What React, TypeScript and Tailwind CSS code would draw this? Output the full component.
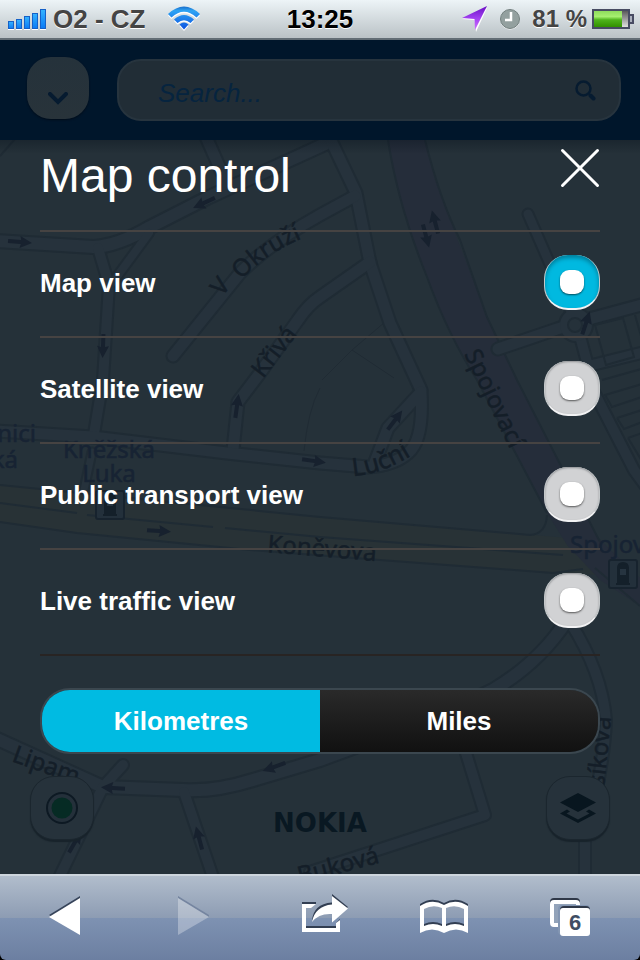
import { useState } from "react";

type Road = { d: string; w: number };

const roads: Road[] = [
  { w: 14, d: "M-5 241L93 247Q118 246 150 227L207 198L325 144" },
  { w: 13, d: "M203 130L226 182" },
  { w: 13, d: "M326 130L356 193L370 263L390 323L421 390" },
  { w: 13, d: "M173 356L240 273Q270 243 320 215L355 196" },
  { w: 13, d: "M370 262L320 297Q308 305 298 320L260 373L238 402L233 450" },
  { w: 12, d: "M98 248L109 285L103 380L94 434" },
  { w: 10, d: "M149 233L113 282" },
  { w: 13, d: "M-5 431L93 437L227 453L320 463L368 467Q395 465 408 453Q424 440 421 392L388 428L375 462" },
  { w: 9, d: "M92 452L84 490" },
  { w: 11, d: "M528 214L567 303L577 325" },
  { w: 13, d: "M498 349L557 329L593 318L645 304" },
  { w: 12, d: "M577 325L588 366L645 352" },
  { w: 12, d: "M594 392L634 470L645 485" },
  { w: 14, d: "M567 620Q540 662 493 690L440 716L320 760L253 780Q215 792 183 790L103 787L-5 738" },
  { w: 12, d: "M570 622Q602 672 606 720Q604 770 585 835V880" },
  { w: 12, d: "M462 740L485 815L310 872" },
  { w: 12, d: "M184 792L214 880" },
  { w: 12, d: "M123 765L103 787L58 880" },
];

const arrows: [number, number, number][] = [
  [20, 242, 5], [204, 203, 155], [103, 346, 92], [237, 406, -82], [395, 420, -53],
  [314, 461, 8], [159, 531, 4], [274, 767, 160], [113, 788, 183], [199, 838, -105],
  [586, 323, -72], [435, 222, -105], [426, 236, 75], [75, 842, -60],
];

const labels = [
  { id: "okruzi-v", d: "M222 297L246 267", text: "V", size: 24 },
  { id: "okruzi", d: "M242 280Q266 251 318 232", text: "Okruží", size: 24 },
  { id: "kriva", d: "M263 379L310 318", text: "Křivá", size: 24 },
  { id: "spojovaci", d: "M464 354L520 470", text: "Spojovací", size: 24 },
  { id: "lucni", d: "M353 476Q385 474 420 450", text: "Luční", size: 25 },
  { id: "konevova", d: "M267 552L400 563", text: "Koněvova", size: 24 },
  { id: "lipam", d: "M11 761L100 793", text: "Lipam", size: 24 },
  { id: "bukova", d: "M300 884L390 860", text: "Buková", size: 24 },
  { id: "sikova", d: "M604 787L614 690", text: "síkova", size: 24 },
];

function Station({ x, y }: { x: number; y: number }) {
  return (
    <g transform={`translate(${x} ${y})`}>
      <rect x="1" y="1" width="28" height="28" rx="2" fill="#23303b" stroke="#17232e" strokeWidth="2" />
      <path d="M10 23V9Q10 4 15 4Q20 4 20 9V23ZM8 25H22" fill="#14202a" stroke="#14202a" strokeWidth="2" />
      <path d="M12 10H18V16H12Z" fill="#263440" />
    </g>
  );
}

function CityMap() {
  return (
    <svg
      className="absolute inset-0 h-full w-full"
      viewBox="0 140 640 734"
      preserveAspectRatio="xMidYMid slice"
      aria-hidden="true"
    >
      <defs>
        <linearGradient id="mapShade" x1="0" y1="0" x2="0" y2="1">
          <stop offset="0" stopColor="#000a14" stopOpacity="0.28" />
          <stop offset="1" stopColor="#000a14" stopOpacity="0" />
        </linearGradient>
      </defs>
      <rect x="-400" y="-400" width="1500" height="1900" fill="#253139" />
      <path
        d="M0 485L320 517L533 535L590 540L600 575L553 573L380 560L250 550L77 533L0 522Z"
        fill="#283236"
      />
      <path
        d="M388 140Q398 205 427 277Q448 335 477 380L547 513L567 545L600 580L640 606V578L597 537L517 380L487 317L435 180L425 140Z"
        fill="#252d3a"
      />
      <g fill="none" stroke="#1f2b34" strokeWidth="2">
        <path d="M0 485L320 517L530 535Q546 534 547 515" />
        <path d="M0 503L77 513M87 515L213 527M225 528L320 537L563 555" />
        <path d="M0 522L77 533L250 550L380 560L553 573L583 569" />
        <path d="M388 140Q398 205 427 277Q448 335 477 380L547 513M595 568L640 606" />
        <path d="M425 140Q440 200 460 240L487 317L517 380L600 542" />
        <path d="M0 156L15 139" />
      </g>
      <g fill="none" stroke="#202b34">
        <path d="M385 322L352 350L394 378M352 350L322 380M320 388Q308 410 304 451" />
      </g>
      <g fill="none" strokeLinecap="round" strokeLinejoin="round">
        {roads.map((r) => (
          <path key={r.d} d={r.d} stroke="#1f2b34" strokeWidth={r.w + 2} />
        ))}
        <circle cx="576" cy="325" r="18" fill="#1f2b34" />
        {roads.map((r) => (
          <path key={r.d} d={r.d} stroke="#26323c" strokeWidth={r.w - 2} />
        ))}
        <circle cx="576" cy="325" r="16" fill="#26323c" />
        <circle cx="575" cy="325" r="7" stroke="#1f2b34" strokeWidth="2" fill="#25313a" />
      </g>
      <g fill="none" stroke="#1f2b34" strokeWidth="2">
        <path d="M595 325L623 318L634 357L606 365ZM635 315L645 350" />
        <path d="M602 380L645 368M605 395L642 384V397L612 407ZM617 418L645 409M617 418L624 429L645 421M628 438L645 432M628 438L645 466" />
      </g>
      <g fill="#17212e">
        {arrows.map(([x, y, a]) => (
          <path
            key={`${x}-${y}`}
            transform={`translate(${x} ${y}) rotate(${a})`}
            d="M-12 -2H1L0 -6L12 0L0 6L1 2H-12Z"
          />
        ))}
      </g>
      <Station x={95} y={490} />
      <Station x={608} y={559} />
      <g className="font-['Noto_Sans','Open_Sans',sans-serif]" fill="#141e28" stroke="#141e28" strokeWidth="0.5">
        {labels.map((l) => (
          <g key={l.id}>
            <path id={l.id} d={l.d} fill="none" stroke="none" />
            <text fontSize={l.size}>
              <textPath href={`#${l.id}`}>{l.text}</textPath>
            </text>
          </g>
        ))}
        <g fill="#172333" stroke="#172333" fontSize="24">
          <text x="109" y="458" textAnchor="middle">Kněžská</text>
          <text x="109" y="482" textAnchor="middle">Luka</text>
          <text x="36" y="442" textAnchor="end">nici</text>
          <text x="18" y="468" textAnchor="end">ká</text>
          <text x="570" y="553">Spojov</text>
        </g>
      </g>
      <rect x="-400" y="140" width="1500" height="14" fill="url(#mapShade)" />
    </svg>
  );
}

function StatusBar() {
  return (
    <div className="grid h-10 grid-cols-[1fr_auto_1fr] items-center border-b-2 border-[#626d75] bg-linear-to-b from-[#edf4f7] to-[#bac2c6] font-bold text-[#444444]">
      <div className="flex items-center gap-[7px] pl-2">
        <svg width="38" height="22" viewBox="0 0 38 22" aria-label="Signal strength">
          <defs>
            <linearGradient id="sig" x1="0" y1="0" x2="0" y2="1">
              <stop offset="0" stopColor="#35b4ff" />
              <stop offset="1" stopColor="#0a7af5" />
            </linearGradient>
          </defs>
          <path d="M0 21.5H6M8 21.5H14M16 21.5H22M24 21.5H30M32 21.5H38" stroke="#fff" />
          <g fill="url(#sig)" stroke="#1561c8">
            <rect x=".5" y="13.5" width="5" height="7" />
            <rect x="8.500" y="11.500" width="5" height="9" />
            <rect x="16.500" y="8.500" width="5" height="12" />
            <rect x="24.500" y="5.500" width="5" height="15" />
            <rect x="32.500" y="1.500" width="5" height="19" />
          </g>
        </svg>
        <span className="text-[26px] leading-8 whitespace-nowrap [text-shadow:0_1px_0_#ffffff]">O2 - CZ</span>
        <svg className="ml-4" width="32" height="26" viewBox="0 0 32 26" aria-label="Wi-Fi">
          <defs>
            <linearGradient id="wifi" gradientUnits="userSpaceOnUse" x1="0" y1="0" x2="0" y2="24">
              <stop offset="0" stopColor="#1767c4" />
              <stop offset=".2" stopColor="#2ea4f4" />
              <stop offset="1" stopColor="#0a50e0" />
            </linearGradient>
          </defs>
          <g fill="#fff" transform="translate(0 1.500)">
            <path d="M0 8Q16 -7 32 8L28.500 11.500Q16 0 3.500 11.500Z" />
            <path d="M6 13.500Q16 4.500 26 13.500L22.500 17Q16 11.500 9.500 17Z" />
            <path d="M11.500 18.500Q16 14.500 20.500 18.500L16 23.500Z" />
          </g>
          <g fill="url(#wifi)">
            <path d="M0 8Q16 -7 32 8L28.500 11.500Q16 0 3.500 11.500Z" />
            <path d="M6 13.500Q16 4.500 26 13.500L22.500 17Q16 11.500 9.500 17Z" />
            <path d="M11.500 18.500Q16 14.500 20.500 18.500L16 23.500Z" />
          </g>
        </svg>
      </div>
      <time className="text-[26px] leading-8 text-black [text-shadow:0_1px_0_#ffffff]">13:25</time>
      <div className="flex items-center justify-end pr-[6px]">
        <svg width="26" height="26" viewBox="0 0 26 26" aria-label="Location in use">
          <defs>
            <linearGradient id="loc" x1="0" y1="0" x2="0" y2="1">
              <stop offset="0" stopColor="#6a0fc4" />
              <stop offset=".5" stopColor="#a040f0" />
              <stop offset="1" stopColor="#d070ff" />
            </linearGradient>
          </defs>
          <path d="M25 2L14 26L12.500 14L0 13Z" fill="#fff" />
          <path d="M25 0L13 24L12.500 13L0 12Z" fill="url(#loc)" />
        </svg>
        <svg className="ml-3" width="20" height="22" viewBox="0 0 20 22" aria-label="Alarm set">
          <circle cx="10" cy="12" r="9.500" fill="#fff" />
          <circle cx="10" cy="11" r="9.500" fill="#93a09f" stroke="#73807f" />
          <path d="M11 4V12H5" fill="none" stroke="#fff" strokeWidth="2.500" />
        </svg>
        <span className="ml-3 text-2xl leading-8 whitespace-nowrap [text-shadow:0_1px_0_#ffffff]">81 %</span>
        <svg className="ml-[5px]" width="42" height="22" viewBox="0 0 42 22" aria-label="Battery">
          <defs>
            <linearGradient id="bat" x1="0" y1="0" x2="0" y2="1">
              <stop offset="0" stopColor="#8fdc5c" />
              <stop offset=".35" stopColor="#a6f070" />
              <stop offset=".55" stopColor="#4fb41c" />
              <stop offset="1" stopColor="#329000" />
            </linearGradient>
            <linearGradient id="batEmpty" x1="0" y1="0" x2="0" y2="1">
              <stop offset="0" stopColor="#5a5a5a" />
              <stop offset="1" stopColor="#e0e0e0" />
            </linearGradient>
          </defs>
          <rect x="1" y="2" width="36" height="18" fill="#fff" stroke="#474b62" strokeWidth="2" />
          <rect x="30" y="3" width="6" height="16" fill="url(#batEmpty)" />
          <rect x="2" y="3" width="28" height="16" fill="url(#bat)" />
          <path d="M38 7H41V15H38" fill="#aab0bd" stroke="#474b62" strokeWidth="2" />
        </svg>
      </div>
    </div>
  );
}

function SearchHeader() {
  return (
    <header className="flex h-[100px] items-center gap-7 bg-[#00162b] pr-[19px] pl-[27px]">
      <button
        type="button"
        aria-label="Open menu"
        className="mb-1 flex h-[62px] w-[62px] shrink-0 items-center justify-center rounded-3xl bg-linear-to-b from-[#25323b] to-[#28333a] pt-5 shadow-[0_1px_2px_#000c18]"
      >
        <svg width="20" height="13" viewBox="0 0 20 13" aria-hidden="true">
          <path d="M2 2L10 10L18 2" fill="none" stroke="#061b30" strokeWidth="4" strokeLinecap="round" />
        </svg>
      </button>
      <label className="flex h-[62px] min-w-0 flex-1 items-center rounded-3xl border-2 border-[#27343e] bg-[#212d36] pr-[23px] pl-[39px]">
        <input
          type="search"
          aria-label="Search"
          placeholder="Search..."
          className="min-w-0 flex-1 bg-transparent pt-[6px] text-[26px] leading-8 italic outline-none placeholder:text-[#06243f] placeholder:opacity-100"
        />
        <svg width="21" height="21" viewBox="0 0 21 21" aria-hidden="true">
          <circle cx="8.500" cy="8.500" r="7" fill="none" stroke="#061b30" strokeWidth="2.500" />
          <path d="M15.500 15.500L18.500 18.500" stroke="#061b30" strokeWidth="4" strokeLinecap="round" />
        </svg>
      </label>
    </header>
  );
}

const views = ["Map view", "Satellite view", "Public transport view", "Live traffic view"];

function MapControl() {
  const [view, setView] = useState(views[0]);
  const [unit, setUnit] = useState("Kilometres");
  return (
    <section className="px-10 text-white">
      <div className="flex h-[90px] items-start justify-between pt-2">
        <h1 className="text-5xl leading-[56px]">Map control</h1>
        <button type="button" aria-label="Close">
          <svg width="40" height="40" viewBox="0 0 40 40" aria-hidden="true">
            <path d="M2.500 2.500L37.500 37.500M37.500 2.500L2.500 37.500" stroke="#fff" strokeWidth="3" strokeLinecap="round" />
          </svg>
        </button>
      </div>
      <div role="radiogroup" aria-label="Map type" className="border-b-2 border-[#282423]">
        {views.map((v) => (
          <label
            key={v}
            className="flex h-[106px] items-center justify-between border-t-2 border-[#464342] pb-[3px] text-[26px] leading-8 font-bold"
          >
            {v}
            <input
              type="radio"
              name="view"
              checked={view === v}
              onChange={() => setView(v)}
              className="flex h-[55px] w-14 shrink-0 appearance-none items-center justify-center rounded-3xl border-x border-b-2 border-x-[#c4c8ca] border-b-[#f2f2f3] bg-[#d1d2d4] shadow-[inset_0_1px_2px_#8d8f92] before:h-6 before:w-6 before:rounded-[9px] before:bg-white before:shadow-[0_1px_2px_rgba(0,0,0,0.6)] before:content-[''] checked:bg-[#00b9e0] checked:shadow-[inset_0_3px_4px_#007f9c]"
            />
          </label>
        ))}
      </div>
      <div
        role="group"
        aria-label="Distance unit"
        className="mt-8 flex h-[66px] overflow-hidden rounded-[30px] border-2 border-[#3b474f]"
      >
        {["Kilometres", "Miles"].map((u) => (
          <button
            key={u}
            type="button"
            aria-pressed={unit === u}
            onClick={() => setUnit(u)}
            className="flex-1 bg-linear-to-b from-[#2a2a2a] to-[#111111] text-[26px] leading-8 font-bold aria-pressed:from-[#00bbe2] aria-pressed:to-[#00bbe2]"
          >
            {u}
          </button>
        ))}
      </div>
    </section>
  );
}

const mapButton =
  "flex h-16 w-16 items-center justify-center rounded-3xl border border-[#1b262e] bg-[#26323b] shadow-[0_2px_1px_#18232b]";

function MapFooter() {
  return (
    <div className="mt-[22px] mb-[34px] flex items-center justify-between px-[30px]">
      <button type="button" aria-label="My location" className={mapButton}>
        <svg width="32" height="32" viewBox="0 0 32 32" aria-hidden="true">
          <circle cx="16" cy="16" r="15" fill="#24303a" stroke="#0d1923" strokeWidth="2" />
          <circle cx="16" cy="16" r="10.500" fill="#062b24" />
        </svg>
      </button>
      <span className="pt-[30px] font-['DejaVu_Sans',sans-serif] text-[26px] leading-8 font-bold text-[#091822]">
        NOKIA
      </span>
      <button type="button" aria-label="Map layers" className={mapButton}>
        <svg width="36" height="30" viewBox="0 0 36 30" aria-hidden="true">
          <path d="M18 0L36 9.500L18 19L0 9.500Z" fill="#08161f" />
          <path d="M7 16.500L0 20.500L18 30L36 20.500L29 16.500L26 18.500L29.500 20.500L18 26.500L6.500 20.500L10 18.500Z" fill="#08161f" />
        </svg>
      </button>
    </div>
  );
}

const toolButton = "flex items-center justify-center";
const bookPath =
  "M0 6Q12 -2 24 5Q36 -2 48 6V33Q36 26 24 33Q12 26 0 33ZM4 9V26Q13 22 22 26V8Q13 4 4 9ZM26 8V26Q35 22 44 26V9Q35 4 26 8Z";

function BrowserBar() {
  return (
    <div className="bg-black">
      <nav
        aria-label="Browser"
        className="grid h-[86px] grid-cols-5 items-center rounded-b-md border-t-2 border-[#cdd5dd] bg-[linear-gradient(#b1bdcc_0%,#8d9cb3_50%,#7e92b2_50%,#6c7fa1_100%)] pb-1"
      >
        <button type="button" aria-label="Back" className={toolButton}>
          <svg width="56" height="40" viewBox="0 0 56 40" aria-hidden="true">
            <path d="M44 0V37L13 19Z" fill="#37445a" />
            <path d="M44 2V39L13 21Z" fill="#fff" />
          </svg>
        </button>
        <button type="button" aria-label="Forward" disabled className={toolButton}>
          <svg width="56" height="40" viewBox="0 0 56 40" aria-hidden="true">
            <path d="M14 0V2L45 21V19Z" fill="#7585a0" />
            <path d="M14 2V39L45 21Z" fill="#fff" fillOpacity=".3" />
          </svg>
        </button>
        <button type="button" aria-label="Share" className={toolButton}>
          <svg width="56" height="44" viewBox="0 0 56 44" aria-hidden="true">
            <path d="M10 8H24V10H10ZM14 32H44V35H14ZM44 29L48 25V29Z" fill="#323e52" />
            <path d="M10 10H24L19 14H14V34H44V29L48 26V38H10Z" fill="#fff" />
            <path d="M20 27Q21 10 40 8.500V0L56 13L40 27V19Q25 18 20 27Z" fill="#323e52" />
            <path d="M20 28Q23 12 40 10.500V2L56 14.500L40 28.500V20Q27 19 20 28Z" fill="#fff" />
          </svg>
        </button>
        <button type="button" aria-label="Bookmarks" className={toolButton}>
          <svg width="56" height="40" viewBox="0 0 56 40" aria-hidden="true">
            <g fillRule="evenodd">
              <path d={bookPath} fill="#323e52" transform="translate(0 2)" />
              <path d={bookPath} fill="#fff" transform="translate(0 4)" />
            </g>
          </svg>
        </button>
        <button type="button" aria-label="Pages" className={toolButton}>
          <svg width="56" height="40" viewBox="0 0 56 40" aria-hidden="true">
            <rect x="4" y="4" width="26" height="24" rx="2" fill="none" stroke="#2f3848" strokeWidth="4" />
            <rect x="4" y="6" width="26" height="23" rx="2" fill="#93a3b9" stroke="#fff" strokeWidth="4" />
            <rect x="10" y="9" width="32" height="30" rx="4" fill="#8396b2" />
            <rect x="12" y="10" width="30" height="28" rx="4" fill="#2f3848" />
            <rect x="12" y="12" width="30" height="28" rx="3" fill="#fff" />
            <text x="27" y="34" textAnchor="middle" fontSize="22" fontWeight="bold" fill="#3f4d63">
              6
            </text>
          </svg>
        </button>
      </nav>
    </div>
  );
}

export default function App() {
  return (
    <div className="flex min-h-screen flex-col overflow-hidden bg-[#253139] font-['Liberation_Sans',Arial,sans-serif]">
      <StatusBar />
      <SearchHeader />
      <main className="relative flex-1">
        <CityMap />
        <div className="relative">
          <MapControl />
          <MapFooter />
        </div>
      </main>
      <BrowserBar />
    </div>
  );
}
